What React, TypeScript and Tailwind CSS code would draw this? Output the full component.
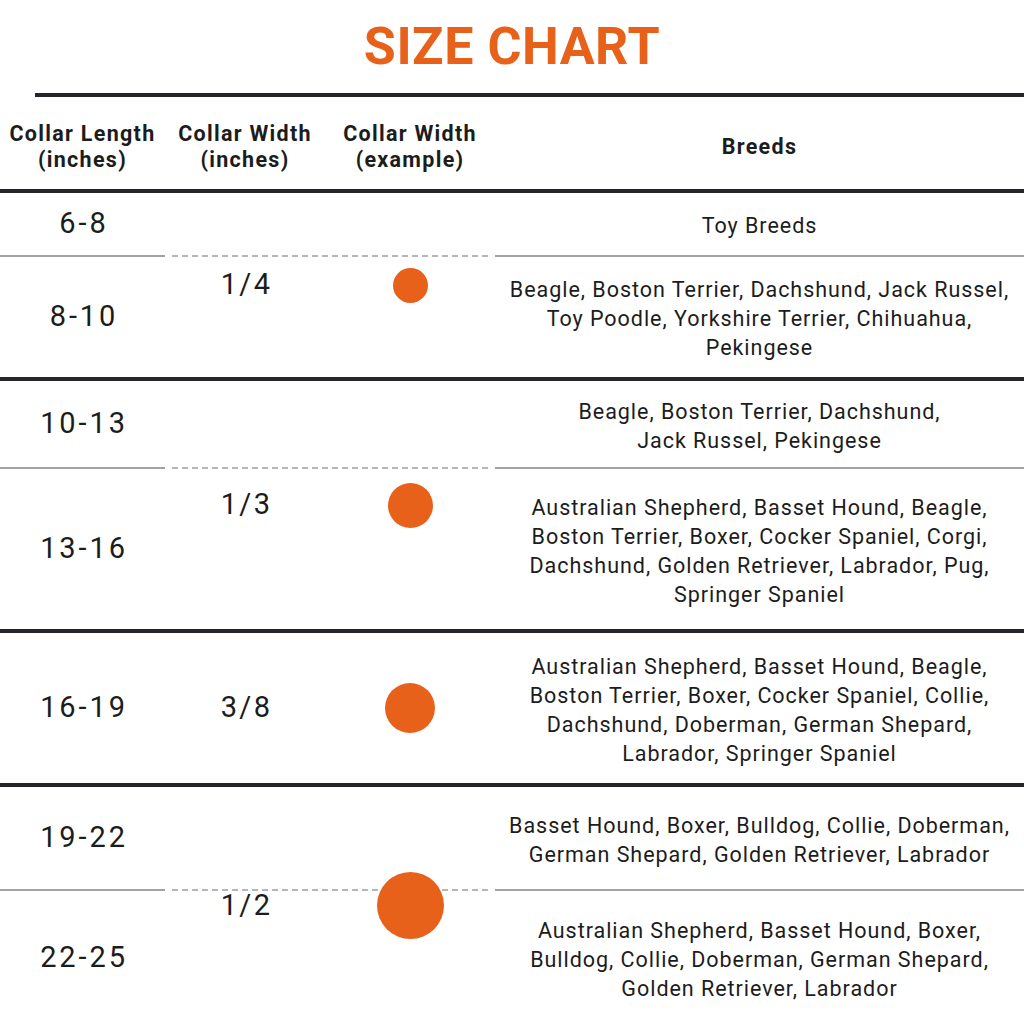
import React from "react";

type Group = {
  width: string;
  dot: string;
  rows: { length: string; breeds: string[]; h: string }[];
};

const groups: Group[] = [
  {
    width: "1/4",
    dot: "w-[35px] h-[35px]",
    rows: [
      { length: "6-8", breeds: ["Toy Breeds"], h: "h-[62px]" },
      {
        length: "8-10",
        breeds: [
          "Beagle, Boston Terrier, Dachshund, Jack Russel,",
          "Toy Poodle, Yorkshire Terrier, Chihuahua,",
          "Pekingese",
        ],
        h: "h-[120px]",
      },
    ],
  },
  {
    width: "1/3",
    dot: "w-[45px] h-[45px]",
    rows: [
      {
        length: "10-13",
        breeds: ["Beagle, Boston Terrier, Dachshund,", "Jack Russel, Pekingese"],
        h: "h-[86px]",
      },
      {
        length: "13-16",
        breeds: [
          "Australian Shepherd, Basset Hound, Beagle,",
          "Boston Terrier, Boxer, Cocker Spaniel, Corgi,",
          "Dachshund, Golden Retriever, Labrador, Pug,",
          "Springer Spaniel",
        ],
        h: "h-[160px]",
      },
    ],
  },
  {
    width: "3/8",
    dot: "w-[50px] h-[50px]",
    rows: [
      {
        length: "16-19",
        breeds: [
          "Australian Shepherd, Basset Hound, Beagle,",
          "Boston Terrier, Boxer, Cocker Spaniel, Collie,",
          "Dachshund, Doberman, German Shepard,",
          "Labrador, Springer Spaniel",
        ],
        h: "h-[150px]",
      },
    ],
  },
  {
    width: "1/2",
    dot: "w-[67px] h-[67px]",
    rows: [
      {
        length: "19-22",
        breeds: [
          "Basset Hound, Boxer, Bulldog, Collie, Doberman,",
          "German Shepard, Golden Retriever, Labrador",
        ],
        h: "h-[102px]",
      },
      {
        length: "22-25",
        breeds: [
          "Australian Shepherd, Basset Hound, Boxer,",
          "Bulldog, Collie, Doberman, German Shepard,",
          "Golden Retriever, Labrador",
        ],
        h: "h-[133px]",
      },
    ],
  },
];

const cols = "grid grid-cols-[165px_160px_170px_1fr]";

function ThickLine() {
  return <div className="h-[4px] bg-[#25262b]" />;
}

function GroupRows({ group }: { group: Group }) {
  const split = group.rows.length === 2;
  return (
    <div className={cols}>
      {group.rows.map((row, i) => (
        <React.Fragment key={row.length}>
          {i === 1 && (
            <>
              <div className="col-start-1 row-start-2 h-[2px] bg-[#a3a3a3]" />
              <div className="col-start-2 col-span-2 row-start-2 mx-[7px] h-[2px] border-t-2 border-dashed border-[#b4b7ba]" />
              <div className="col-start-4 row-start-2 h-[2px] bg-[#a3a3a3]" />
            </>
          )}
          <div
            className={`col-start-1 ${i === 0 ? "row-start-1" : "row-start-3"} ${row.h} flex items-center justify-center pl-[3px] text-[29px] tracking-[0.1em]`}
          >
            {row.length}
          </div>
          <div
            className={`col-start-4 ${i === 0 ? "row-start-1" : "row-start-3"} ${row.h} flex flex-col items-center justify-center pt-[3px] text-[21.5px] leading-[29px] tracking-[0.045em]`}
          >
            {row.breeds.map((b) => (
              <p key={b}>{b}</p>
            ))}
          </div>
        </React.Fragment>
      ))}
      <div
        className={`col-start-2 row-start-1 ${split ? "row-span-3" : ""} flex items-center justify-center pl-[3px] text-[29px] tracking-[0.08em]`}
      >
        {group.width}
      </div>
      <div
        className={`col-start-3 row-start-1 ${split ? "row-span-3" : ""} flex items-center justify-center`}
      >
        <div className={`${group.dot} rounded-full bg-[#e8611a]`} />
      </div>
    </div>
  );
}

export default function App() {
  return (
    <div className="w-[1024px] h-[1024px] overflow-hidden bg-white text-[#1c1c1c] font-['Roboto','Liberation_Sans',sans-serif]">
      <div className="h-[93px] flex items-center justify-center">
        <h1 className="text-[52px] font-bold text-[#e8611a] tracking-[0.01em] leading-none">
          SIZE CHART
        </h1>
      </div>
      <div className="ml-[35px]">
        <ThickLine />
      </div>
      <div className={`${cols} h-[92px] items-center pt-[8px] text-center font-bold text-[21.5px] leading-[26px] tracking-[0.06em]`}>
        <p>
          Collar Length
          <br />
          (inches)
        </p>
        <p>
          Collar Width
          <br />
          (inches)
        </p>
        <p>
          Collar Width
          <br />
          (example)
        </p>
        <p>Breeds</p>
      </div>
      {groups.map((g) => (
        <div key={g.width}>
          <ThickLine />
          <GroupRows group={g} />
        </div>
      ))}
    </div>
  );
}
